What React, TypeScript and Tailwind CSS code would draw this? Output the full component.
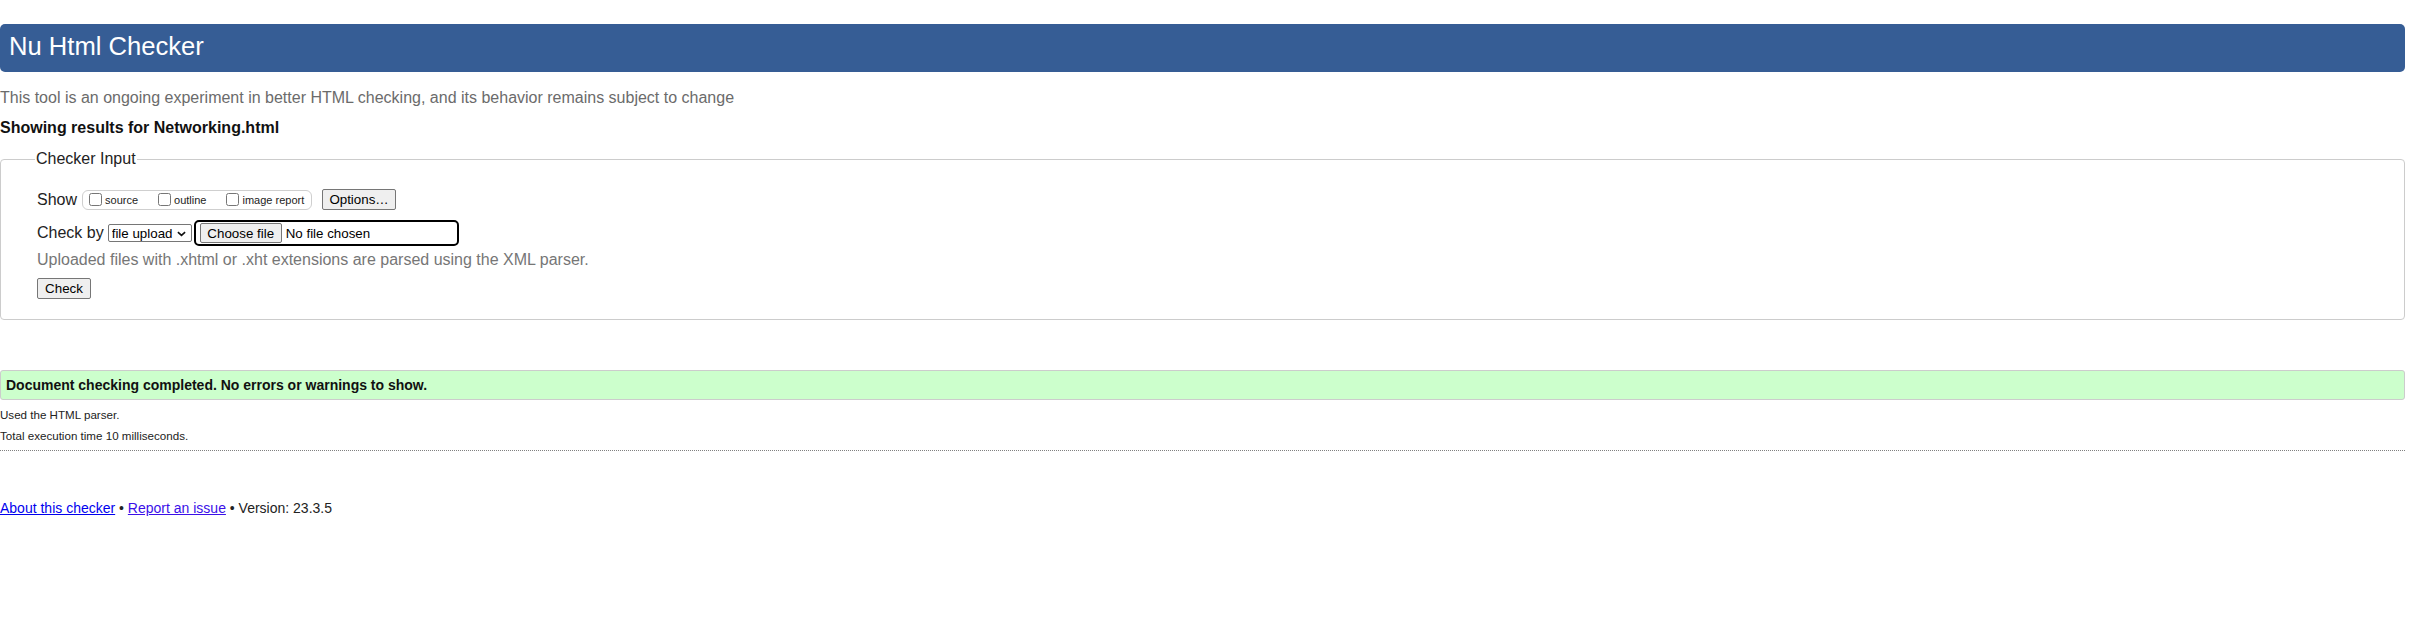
import { useState } from 'react'

const SHOW_OPTIONS = ['source', 'outline', 'image report']

export default function App() {
  const [checked, setChecked] = useState<Record<string, boolean>>({})
  const [method, setMethod] = useState('file')

  return (
    <div className="min-h-screen bg-white pr-[27px] font-['Liberation_Sans',Arial,sans-serif] text-[#222]">
      {/* Header */}
      <h1 className="mt-[24px] h-[48px] rounded-[5px] bg-[#365d95] pl-[9px] pt-[8px] text-[25.6px] font-normal leading-[29px] text-white">
        Nu Html Checker
      </h1>

      <p className="mt-[17px] text-[16px] leading-[18px] text-[#6b6b6b]">
        This tool is an ongoing experiment in better HTML checking, and its behavior remains subject to change
      </p>
      <p className="mt-[12px] text-[16px] font-bold leading-[18px] text-[#111]">
        Showing results for Networking.html
      </p>

      {/* Checker input */}
      <fieldset className="mt-[13px] rounded-[4px] border border-[#cccccc] pb-[20px] pl-[36px] pt-[21px]">
        <legend className="ml-[-2px] px-[1px] text-[16px] leading-[18px]">Checker Input</legend>

        <div className="flex h-[21px] items-center">
          <span className="text-[16px] leading-[18px]">Show</span>
          <div className="ml-[5px] flex h-[20px] w-[230px] items-center rounded-[6px] border border-[#cfcfcf] pl-[6px]">
            {SHOW_OPTIONS.map((opt, i) => (
              <label key={opt} className={`flex items-center gap-[3px] ${i > 0 ? 'ml-[20px]' : ''}`}>
                <input
                  type="checkbox"
                  checked={!!checked[opt]}
                  onChange={(e) => setChecked({ ...checked, [opt]: e.target.checked })}
                  className="m-0 h-[13px] w-[13px]"
                />
                <span className="pt-[2px] text-[11px] leading-[13px]">{opt}</span>
              </label>
            ))}
          </div>
          <button className="ml-[10px] h-[21px] w-[74px] rounded-[2px] border border-[#767676] bg-[#efefef] text-[13.33px] leading-[15px] text-black">
            Options…
          </button>
        </div>

        <div className="mt-[10px] flex h-[26px] items-center">
          <span className="text-[16px] leading-[18px]">Check by</span>
          <span className="relative ml-[4px] flex">
            <select
              value={method}
              onChange={(e) => setMethod(e.target.value)}
              className="h-[18px] w-[84px] appearance-none rounded-[2px] border border-[#767676] bg-white pl-[3px] text-[13.33px] leading-[15px] text-black"
            >
              <option value="address">address</option>
              <option value="file">file upload</option>
              <option value="text">text input</option>
            </select>
            <svg
              viewBox="0 0 10 6"
              className="pointer-events-none absolute right-[6px] top-[6.5px] h-[6px] w-[9px]"
              fill="none"
              stroke="#111"
              strokeWidth="1.8"
            >
              <path d="M1 1l4 3.6L9 1" />
            </svg>
          </span>
          <div className="ml-[2px] flex h-[26px] w-[265px] items-center rounded-[5px] border-2 border-black pl-[4px]">
            <button className="h-[20px] w-[82px] rounded-[2px] border border-[#767676] bg-[#efefef] text-[13.33px] leading-[15px] text-black">
              Choose file
            </button>
            <span className="ml-[4px] text-[13.33px] leading-[15px] text-black">No file chosen</span>
          </div>
        </div>

        <p className="mt-[5px] text-[16px] leading-[18px] text-[#767676]">
          Uploaded files with .xhtml or .xht extensions are parsed using the XML parser.
        </p>

        <button className="mt-[9px] block h-[21px] w-[54px] rounded-[2px] border border-[#767676] bg-[#efefef] text-[13.33px] leading-[15px] text-black">
          Check
        </button>
      </fieldset>

      {/* Results */}
      <div className="mt-[50px] rounded-[3px] border border-[#cccccc] bg-[#ccffcc] py-[6px] pl-[5px] text-[14px] font-bold leading-[16px] text-[#111]">
        Document checking completed. No errors or warnings to show.
      </div>
      <p className="mt-[4px] text-[11.6px] leading-[21px]">Used the HTML parser.</p>
      <p className="text-[11.6px] leading-[21px]">Total execution time 10 milliseconds.</p>

      <hr className="mt-[4px] border-t border-dotted border-[#808080]" />

      {/* Footer */}
      <p className="mt-[49px] text-[14px] leading-[16px]">
        <a href="#" className="text-[#0000ee] underline">
          About this checker
        </a>
        {' • '}
        <a href="#" className="text-[#3b10e8] underline">
          Report an issue
        </a>
        {' • Version: 23.3.5'}
      </p>
    </div>
  )
}
